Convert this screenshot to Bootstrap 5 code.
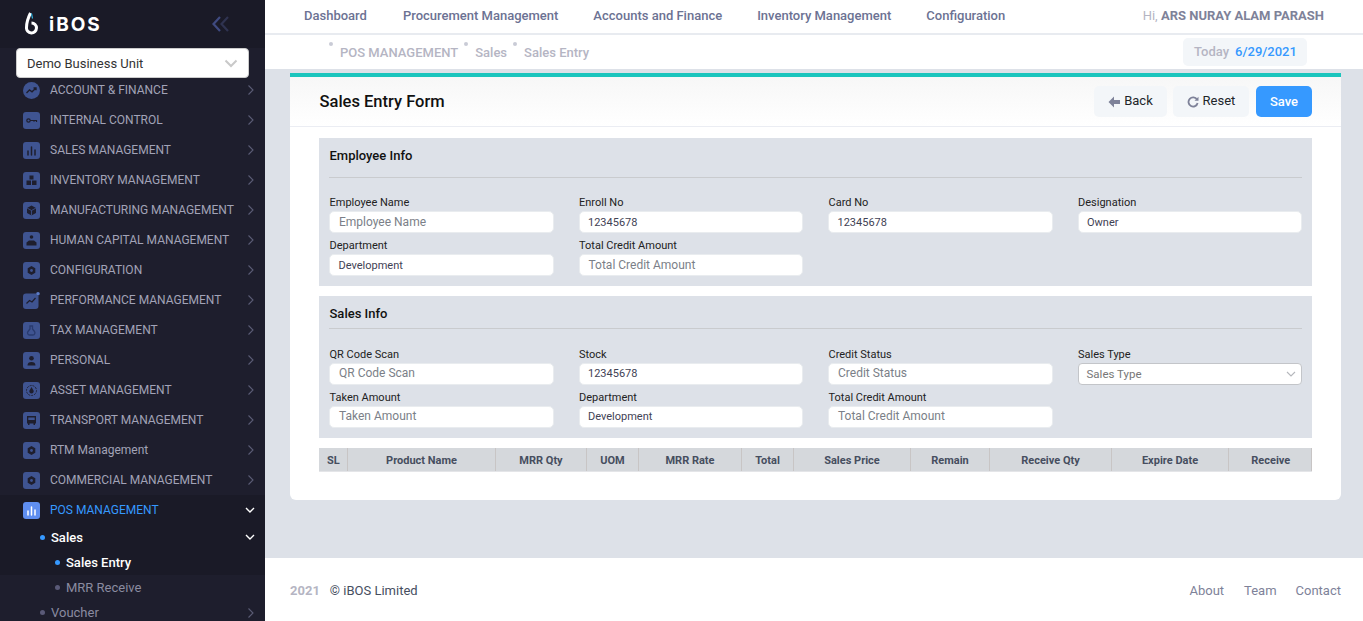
<!DOCTYPE html>
<html lang="en"><head><meta charset="utf-8"><title>Sales Entry</title>
<link href="https://cdn.jsdelivr.net/npm/bootstrap@5.3.0/dist/css/bootstrap.min.css" rel="stylesheet">
<style>
html,body{height:621px;overflow:hidden}
body{font-family:Roboto,"Liberation Sans",sans-serif;font-size:13px;background:#dde1e8;color:#212529}
.shell{height:621px}
.side{width:265px;flex:none;background:#1e1e2d;overflow:hidden;height:621px}
.brand{height:48px;background:#1a1a27;padding-left:25px;padding-right:35px}
.brand-text{font-family:Inter,Roboto,sans-serif;font-weight:700;font-size:19px;letter-spacing:2px;color:#fff;line-height:1}
.brand-row{gap:11px}
.bu{position:relative;z-index:2;height:30px;margin:0 16px -3px;background:#fff;border:1px solid #ccc;border-radius:4px;padding:1px 10px 0;font-size:13px;color:#333}
.mi{height:30px;padding-left:23px;padding-right:10px;color:#a2a3b7;font-size:12px;gap:10px}
.mi svg.ico{width:17px;height:17px;flex:none}
.mi .lbl{flex:1;white-space:nowrap}
.mi.on{background:#1a1a27;color:#3699ff}
.sub{height:25px;color:#8a8ba0;font-size:13px;padding-right:10px}
.sub .dotm{width:5px;height:5px;border-radius:50%;background:#5a5a78;flex:none}
.sub.l2{padding-left:40px;gap:6px}
.sub.l3{padding-left:55px;gap:6px}
.sub .lbl{flex:1;font-weight:400}
.sub.cur{color:#fff;font-weight:500}
.sub.cur .lbl{font-weight:500}
.sub.cur .dotm{background:#3699ff}
.sub.act{background:#1a1a27}
.main{flex:1;min-width:0;height:621px}
.tnav{flex:none;height:35px;background:#fff;border-bottom:2px solid #e8ebf0;padding:0 39px 2px 39px;gap:35px;font-weight:500;color:#6c7293}
.tnav>span:first-child{margin-right:1px}
.hi{font-weight:400;color:#b5b5c3}
.hi b{font-weight:700;color:#7e8299}
.bar{flex:none;height:34px;background:#fff;padding:2px 56px 0 75px;color:#b5b5c3;font-weight:500}
.crumb{position:relative;margin-right:17px}
.crumb::before{content:"";position:absolute;left:-11px;top:-1px;width:4px;height:4px;border-radius:50%;background:#c9cbd6}
.today{height:28px;width:124px;background:#f3f6f9;border-radius:5px;padding-left:11px;gap:6px;margin-top:-2px}
.today span+span{color:#3699ff}
.wrap{flex:none;padding:4px 22px 0 25px;height:489px}
.panel{background:#fff;border-top:4px solid #1bc5bd;border-radius:0 0 6px 6px;height:427px;padding:0}
.phead{height:50px;background:linear-gradient(#f7f7f7,#fff);border-bottom:1px solid #ebedf3;padding:0 29px 0 29.500px}
.phead h5{font-size:16.500px;font-weight:500;color:#111;margin:0}
.act-btn{height:31px;font-size:13px;border:0;border-radius:5px;background:#f3f6f9;color:#212529;padding:0;gap:4px}
.act-btn svg{margin-top:3px}
.b-back{width:73px;margin-right:6px;padding-bottom:2px}
.b-reset{width:76px;margin-right:7px;padding-bottom:2px}
.b-save{width:56px;background:#3699ff;color:#fff;font-weight:500}
.panel-body{padding:11px 29px 0}
.sect{background:#dde1e8;padding:0 10px;margin-bottom:10px}
.s1{height:148px}
.s2{height:142px}
.sect h6{font-size:13px;font-weight:500;margin:0;color:#111;line-height:15px;border-bottom:1px solid #c9cbce}
.s1 h6{padding:10px 0 14px .5px}
.s2 h6{padding:10px 0 7px .5px}
.fields{--bs-gutter-x:25px;--bs-gutter-y:0}
.s1 .fields{padding-top:12px}
.s2 .fields{padding-top:13px}
.fl{display:block;font-size:11px;line-height:15px;margin:5px 0 1px;padding-left:.5px;color:#222}
.fi{display:block;width:100%;height:22px;background:#fff;border:1px solid #e9ecef;border-radius:5px;padding:0 8.500px;font-size:11px;color:#3f4254;line-height:20px}
.s1 .fi{line-height:22px}
.fi.ph{color:#7b7f88;font-size:12px;padding:0 9px}
.s1 .fi.ph{line-height:20px}
.s2 .fi.ph{line-height:18px}
.fs{height:22px;border:1px solid #c3c5c9;padding:0 5px 0 8px;color:#777;font-size:11.500px;line-height:20px;background:#fff;border-radius:4px}
.grid-head{width:100%;table-layout:fixed;border-collapse:collapse;height:23px}
.grid-head th{background:#d5d8dc;color:#464e5f;font-size:11px;font-weight:700;text-align:center;padding:3px 0 0 1px;border-left:1px solid #c8c5c5;border-bottom:1px solid #e4e5e8;white-space:nowrap;height:23px}
.grid-head th:first-child{border-left:0}
.grid-head th:last-child{box-shadow:inset -1px 0 0 #c8c5c5}
.foot{flex:none;height:63px;background:#fff;padding:3px 22px 0 25px;color:#464e5f}
.foot .yr{color:#b5b5c3;font-weight:700;margin-right:10px}
.foot nav{gap:20px;color:#7e8299}
.foot nav span:last-child{margin-left:-1px}
</style></head><body>
<svg width="0" height="0" class="d-block position-absolute"><defs>
<symbol id="i-bar" viewBox="0 0 17 17"><rect width="17" height="17" rx="3" fill="#3f5491"/><path d="M5 9v4M8.500 5v8M12 8v5" stroke="#1e1e2d" stroke-width="1.500" stroke-linecap="round"/></symbol>
<symbol id="i-barB" viewBox="0 0 17 17"><rect width="17" height="17" rx="3" fill="#5f8ef0"/><path d="M5 9v4M8.500 5v8M12 8v5" stroke="#fff" stroke-width="1.500" stroke-linecap="round"/></symbol>
<symbol id="i-gear" viewBox="0 0 17 17"><rect width="17" height="17" rx="3" fill="#3f5491"/><path d="M8.500 4l3.800 2.200v4.600L8.500 13l-3.800-2.200V6.200z" fill="#1e1e2d"/><circle cx="8.500" cy="8.500" r="1.400" fill="#3f5491"/></symbol>
<symbol id="i-trend" viewBox="0 0 17 17"><circle cx="8.500" cy="8.500" r="8.500" fill="#3f5491"/><path d="M3.500 11l3-3 2.500 1.800L13 6M10.500 6H13v2.300" fill="none" stroke="#1e1e2d" stroke-width="1.400"/></symbol>
<symbol id="i-key" viewBox="0 0 17 17"><rect width="17" height="17" rx="3" fill="#3f5491"/><circle cx="5.500" cy="8.500" r="1.700" fill="none" stroke="#1e1e2d" stroke-width="1.200"/><path d="M7 8.500h6.500v1.500M11 8.500v1.200" fill="none" stroke="#1e1e2d" stroke-width="1.200"/></symbol>
<symbol id="i-box" viewBox="0 0 17 17"><rect width="17" height="17" rx="3" fill="#3f5491"/><path d="M6.500 3.500h4v4h-4zM3.500 8.500h4.500V13H3.500zM9 8.500h4.500V13H9z" fill="#1e1e2d"/></symbol>
<symbol id="i-cube" viewBox="0 0 17 17"><rect width="17" height="17" rx="3" fill="#3f5491"/><path d="M8.500 3.500l4.500 2.500v5l-4.500 2.500L4 11V6z" fill="#1e1e2d"/><path d="M4 6l4.500 2.500L13 6M8.500 8.500v5" fill="none" stroke="#3f5491" stroke-width=".8"/></symbol>
<symbol id="i-hc" viewBox="0 0 17 17"><rect width="17" height="17" rx="3" fill="#3f5491"/><circle cx="8.500" cy="5" r="1.800" fill="#1e1e2d"/><path d="M3.500 13.500v-3L6 8.500h5l2.500 2v3z" fill="#1e1e2d"/></symbol>
<symbol id="i-perf" viewBox="0 0 17 17"><path d="M3 1.500h10a4 4 0 0 0 2.500 2.500v10a3 3 0 0 1-3 3H3a3 3 0 0 1-3-3V4.500a3 3 0 0 1 3-3z" fill="#3f5491"/><path d="M3.500 11.500l3-3 2.500 1.500 3.500-4" fill="none" stroke="#1e1e2d" stroke-width="1.200"/><circle cx="15" cy="1.800" r="1.800" fill="#5b7bc9"/></symbol>
<symbol id="i-tax" viewBox="0 0 17 17"><rect width="17" height="17" rx="3" fill="#3f5491"/><path d="M7 4h2.500v3l2 2.500a2.200 2.200 0 0 1-1.600 3.500H6.500A2.200 2.200 0 0 1 5 9.500L7 7z" fill="none" stroke="#293a6d" stroke-width="1.300"/></symbol>
<symbol id="i-user" viewBox="0 0 17 17"><rect width="17" height="17" rx="3" fill="#3f5491"/><circle cx="8.500" cy="6.300" r="2.300" fill="#1e1e2d"/><path d="M4.500 13.500c0-2.500 1.500-3.500 4-3.500s4 1 4 3.500z" fill="#1e1e2d"/></symbol>
<symbol id="i-asset" viewBox="0 0 17 17"><rect width="17" height="17" rx="3" fill="#3f5491"/><circle cx="8.500" cy="8.500" r="5" fill="none" stroke="#1e1e2d" stroke-width=".9" stroke-dasharray="2 1"/><path d="M8.500 5l2 3.500a2.200 2.200 0 1 1-4 0z" fill="#1e1e2d"/></symbol>
<symbol id="i-bus" viewBox="0 0 17 17"><rect width="17" height="17" rx="3" fill="#3f5491"/><path d="M4 4h9v7.500h-1v1.500h-1.500v-1.500h-4V13H5v-1.500H4z" fill="#1e1e2d"/><path d="M5.300 5.500h6.400V8H5.300z" fill="#3f5491"/></symbol>
<symbol id="i-chev" viewBox="0 0 8 12"><path d="M1.500 1.500L6 6l-4.500 4.500" fill="none" stroke="#5b5c75" stroke-width="1.100"/></symbol>
<symbol id="i-down" viewBox="0 0 10 7"><path d="M1 1l4 4 4-4" fill="none" stroke="#fff" stroke-width="1.400"/></symbol>
</defs></svg>
<div class="shell d-flex">
<aside class="side">
 <div class="brand d-flex align-items-center justify-content-between">
  <div class="brand-row d-flex align-items-center">
   <svg width="13" height="24" viewBox="0 0 13 24"><path d="M5.500 1C3 6 1.500 10 1.500 15.500a5 5 0 1 0 5-4.600" fill="none" stroke="#fff" stroke-width="3"/><path d="M6.500 1.500l1 5" stroke="#2fb8e6" stroke-width="1.200"/></svg>
   <span class="brand-text">iBOS</span>
  </div>
  <svg width="18" height="16" viewBox="0 0 18 16"><path d="M8 1L1.500 8 8 15" fill="none" stroke="#3f4a80" stroke-width="2.200"/><path d="M16 1L9.500 8 16 15" fill="none" stroke="#2f3350" stroke-width="2.200"/></svg>
 </div>
 <div class="bu d-flex align-items-center justify-content-between"><span>Demo Business Unit</span><svg width="14" height="9" viewBox="0 0 14 9"><path d="M1.500 1.500L7 7l5.500-5.500" fill="none" stroke="#c9c9c9" stroke-width="2"/></svg></div>
 <div class="mi d-flex align-items-center"><svg class="ico"><use href="#i-trend"/></svg><span class="lbl">ACCOUNT &amp; FINANCE</span><svg width="8" height="12"><use href="#i-chev"/></svg></div>
 <div class="mi d-flex align-items-center"><svg class="ico"><use href="#i-key"/></svg><span class="lbl">INTERNAL CONTROL</span><svg width="8" height="12"><use href="#i-chev"/></svg></div>
 <div class="mi d-flex align-items-center"><svg class="ico"><use href="#i-bar"/></svg><span class="lbl">SALES MANAGEMENT</span><svg width="8" height="12"><use href="#i-chev"/></svg></div>
 <div class="mi d-flex align-items-center"><svg class="ico"><use href="#i-box"/></svg><span class="lbl">INVENTORY MANAGEMENT</span><svg width="8" height="12"><use href="#i-chev"/></svg></div>
 <div class="mi d-flex align-items-center"><svg class="ico"><use href="#i-cube"/></svg><span class="lbl">MANUFACTURING MANAGEMENT</span><svg width="8" height="12"><use href="#i-chev"/></svg></div>
 <div class="mi d-flex align-items-center"><svg class="ico"><use href="#i-hc"/></svg><span class="lbl">HUMAN CAPITAL MANAGEMENT</span><svg width="8" height="12"><use href="#i-chev"/></svg></div>
 <div class="mi d-flex align-items-center"><svg class="ico"><use href="#i-gear"/></svg><span class="lbl">CONFIGURATION</span><svg width="8" height="12"><use href="#i-chev"/></svg></div>
 <div class="mi d-flex align-items-center"><svg class="ico"><use href="#i-perf"/></svg><span class="lbl">PERFORMANCE MANAGEMENT</span><svg width="8" height="12"><use href="#i-chev"/></svg></div>
 <div class="mi d-flex align-items-center"><svg class="ico"><use href="#i-tax"/></svg><span class="lbl">TAX MANAGEMENT</span><svg width="8" height="12"><use href="#i-chev"/></svg></div>
 <div class="mi d-flex align-items-center"><svg class="ico"><use href="#i-user"/></svg><span class="lbl">PERSONAL</span><svg width="8" height="12"><use href="#i-chev"/></svg></div>
 <div class="mi d-flex align-items-center"><svg class="ico"><use href="#i-asset"/></svg><span class="lbl">ASSET MANAGEMENT</span><svg width="8" height="12"><use href="#i-chev"/></svg></div>
 <div class="mi d-flex align-items-center"><svg class="ico"><use href="#i-bus"/></svg><span class="lbl">TRANSPORT MANAGEMENT</span><svg width="8" height="12"><use href="#i-chev"/></svg></div>
 <div class="mi d-flex align-items-center"><svg class="ico"><use href="#i-gear"/></svg><span class="lbl">RTM Management</span><svg width="8" height="12"><use href="#i-chev"/></svg></div>
 <div class="mi d-flex align-items-center"><svg class="ico"><use href="#i-gear"/></svg><span class="lbl">COMMERCIAL MANAGEMENT</span><svg width="8" height="12"><use href="#i-chev"/></svg></div>
 <div class="mi on d-flex align-items-center"><svg class="ico"><use href="#i-barB"/></svg><span class="lbl">POS MANAGEMENT</span><svg width="10" height="7"><use href="#i-down"/></svg></div>
 <div class="sub l2 cur act d-flex align-items-center"><span class="dotm"></span><span class="lbl">Sales</span><svg width="10" height="7"><use href="#i-down"/></svg></div>
 <div class="sub l3 cur act d-flex align-items-center"><span class="dotm"></span><span class="lbl">Sales Entry</span></div>
 <div class="sub l3 d-flex align-items-center"><span class="dotm"></span><span class="lbl">MRR Receive</span></div>
 <div class="sub l2 d-flex align-items-center"><span class="dotm"></span><span class="lbl">Voucher</span><svg width="8" height="12"><use href="#i-chev"/></svg></div>
</aside>
<div class="main d-flex flex-column">
 <div class="tnav d-flex align-items-center">
  <span>Dashboard</span><span>Procurement Management</span><span>Accounts and Finance</span><span>Inventory Management</span><span>Configuration</span>
  <span class="hi ms-auto">Hi, <b>ARS NURAY ALAM PARASH</b></span>
 </div>
 <div class="bar d-flex align-items-center">
  <span class="crumb">POS MANAGEMENT</span><span class="crumb">Sales</span><span class="crumb">Sales Entry</span>
  <div class="today d-flex align-items-center ms-auto"><span>Today</span><span>6/29/2021</span></div>
 </div>
 <div class="wrap">
  <div class="panel">
   <div class="phead d-flex align-items-center">
    <h5>Sales Entry Form</h5>
    <div class="d-flex ms-auto">
     <button class="act-btn b-back d-flex align-items-center justify-content-center" type="button"><svg width="12" height="12" viewBox="0 0 12 12"><path d="M6 .5L.5 6 6 11.500V8h6V4H6z" fill="#7e8299"/></svg>Back</button>
     <button class="act-btn b-reset d-flex align-items-center justify-content-center" type="button"><svg width="12" height="12" viewBox="0 0 12 12"><path d="M10 3.500A4.600 4.600 0 1 0 10.600 7" fill="none" stroke="#7e8299" stroke-width="1.800"/><path d="M11.500 .8v4h-4z" fill="#7e8299"/></svg>Reset</button>
     <button class="act-btn b-save" type="button">Save</button>
    </div>
   </div>
   <div class="panel-body">
    <section class="sect s1">
     <h6>Employee Info</h6>
     <div class="row fields">
      <div class="col-3"><label class="fl">Employee Name</label><div class="fi ph">Employee Name</div></div>
      <div class="col-3"><label class="fl">Enroll No</label><div class="fi">12345678</div></div>
      <div class="col-3"><label class="fl">Card No</label><div class="fi">12345678</div></div>
      <div class="col-3"><label class="fl">Designation</label><div class="fi">Owner</div></div>
      <div class="col-3"><label class="fl">Department</label><div class="fi">Development</div></div>
      <div class="col-3"><label class="fl">Total Credit Amount</label><div class="fi ph">Total Credit Amount</div></div>
     </div>
    </section>
    <section class="sect s2">
     <h6>Sales Info</h6>
     <div class="row fields">
      <div class="col-3"><label class="fl">QR Code Scan</label><div class="fi ph">QR Code Scan</div></div>
      <div class="col-3"><label class="fl">Stock</label><div class="fi">12345678</div></div>
      <div class="col-3"><label class="fl">Credit Status</label><div class="fi ph">Credit Status</div></div>
      <div class="col-3"><label class="fl">Sales Type</label><div class="fs d-flex align-items-center justify-content-between"><span>Sales Type</span><svg width="10" height="6" viewBox="0 0 10 6"><path d="M1 1l4 4 4-4" fill="none" stroke="#b5b7bc" stroke-width="1.100"/></svg></div></div>
      <div class="col-3"><label class="fl">Taken Amount</label><div class="fi ph">Taken Amount</div></div>
      <div class="col-3"><label class="fl">Department</label><div class="fi">Development</div></div>
      <div class="col-3"><label class="fl">Total Credit Amount</label><div class="fi ph">Total Credit Amount</div></div>
     </div>
    </section>
    <table class="grid-head">
     <colgroup><col width="28"><col width="148"><col width="91"><col width="52"><col width="103"><col width="52"><col width="117"><col width="79"><col width="122"><col width="117"><col width="84"></colgroup>
     <thead><tr><th>SL</th><th>Product Name</th><th>MRR Qty</th><th>UOM</th><th>MRR Rate</th><th>Total</th><th>Sales Price</th><th>Remain</th><th>Receive Qty</th><th>Expire Date</th><th>Receive</th></tr></thead>
    </table>
   </div>
  </div>
 </div>
 <footer class="foot d-flex align-items-center">
  <span class="yr">2021</span><span>© iBOS Limited</span>
  <nav class="d-flex ms-auto"><span>About</span><span>Team</span><span>Contact</span></nav>
 </footer>
</div>
</div>
<script src="https://cdn.jsdelivr.net/npm/bootstrap@5.3.0/dist/js/bootstrap.bundle.min.js"></script>
</body></html>
